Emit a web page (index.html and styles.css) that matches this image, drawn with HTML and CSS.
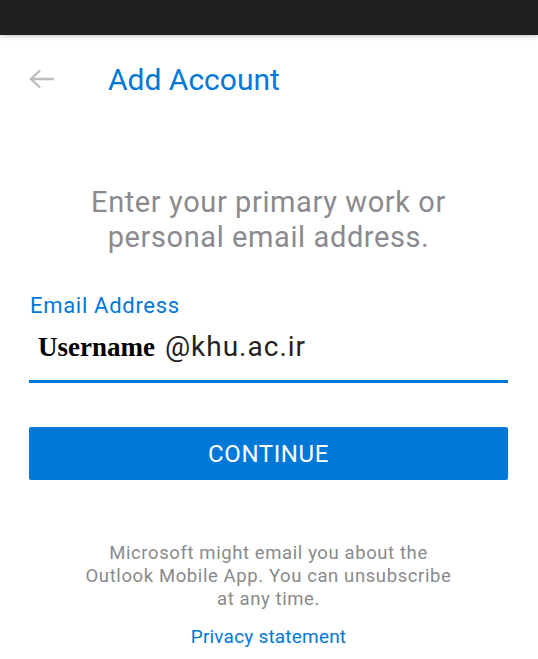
FILE: index.html
```html
<!DOCTYPE html>
<html>
<head>
<meta charset="utf-8">
<link rel="stylesheet" href="styles.css">
</head>
<body>
<div class="statusbar"></div>
<header class="appbar">
  <svg class="back" width="26" height="20" viewBox="0 0 26 20"><path d="M25 10H2M11 1.5L2 10l9 8.5" fill="none" stroke="#bdbdbd" stroke-width="2.4"/></svg>
  <h1 class="title">Add Account</h1>
</header>
<main class="content">
  <p class="prompt">Enter your primary work or<br>personal email address.</p>
  <label class="label">Email Address</label>
  <div class="field"><span class="user">Username</span> <span class="domain">@khu.ac.ir</span></div>
  <button class="continue">CONTINUE</button>
  <p class="note">Microsoft might email you about the<br>Outlook Mobile App. You can unsubscribe<br>at any time.</p>
  <a class="privacy">Privacy statement</a>
</main>
</body>
</html>
```
FILE: styles.css
```css
* { box-sizing: border-box; }
body { margin: 0; background: #fff; font-family: Roboto, "Noto Sans", sans-serif; width: 538px; height: 659px; overflow: hidden; }
.statusbar { height: 35px; background: #1f1f1f; box-shadow: 0 1px 5px rgba(0,0,0,0.25); }
.appbar { display: flex; align-items: center; height: 88px; padding-left: 29px; }
.back { display: block; margin-right: 53px; }
.title { margin: 0; font-weight: 400; font-size: 30px; color: #0078d7; }
.content { display: flex; flex-direction: column; padding: 0 30px 0 29px; }
.prompt { margin: 62px 0 0; text-align: center; font-size: 29px; letter-spacing: 0.6px; line-height: 35px; color: #8a8a8f; }
.label { margin-top: 39px; padding-left: 1px; font-size: 22px; letter-spacing: 0.7px; line-height: 24px; color: #0078d7; }
.field { height: 65px; padding: 12px 0 0 9px; border-bottom: 3px solid #0078d7; font-size: 28px; white-space: nowrap; }
.user { font-family: "Liberation Serif", serif; font-weight: 700; font-size: 27px; color: #000; letter-spacing: 0; }
.domain { margin-left: 3px; color: #222; letter-spacing: 1px; }
.continue { margin-top: 44px; height: 53px; border: 0; border-radius: 2px; background: #0078d7; color: #fff; font-family: Roboto, sans-serif; font-size: 24px; letter-spacing: 0.6px; padding: 0; }
.note { margin: 62px 0 0; text-align: center; font-size: 18.5px; letter-spacing: 0.6px; line-height: 23px; color: #8a8a8a; }
.privacy { margin-top: 14px; text-align: center; font-size: 19px; letter-spacing: 0.2px; color: #0078d7; }
```
